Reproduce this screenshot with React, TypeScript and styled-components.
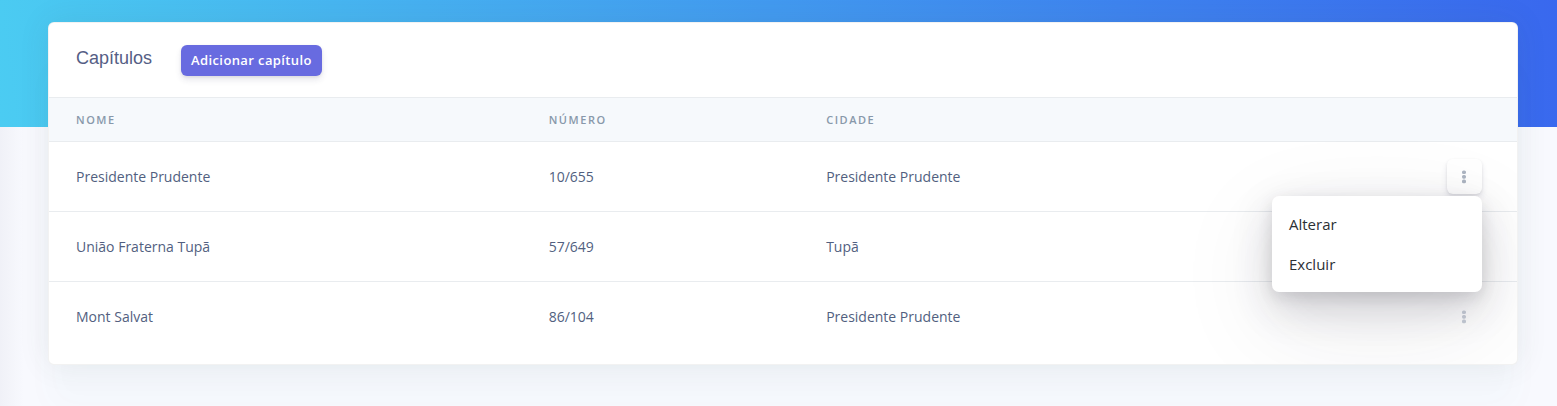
import React from "react";
import styled, { createGlobalStyle } from "styled-components";

const GlobalStyle = createGlobalStyle`
  *, *::before, *::after { box-sizing: border-box; }
  body {
    margin: 0;
    background: #f8f9fe;
    color: #525f7f;
    font-family: "Open Sans", sans-serif;
    font-size: 16px;
    line-height: 24px;
  }
`;

const Page = styled.div`
  min-height: 100vh;
  padding: 22px 39px 42px 48px;
  overflow: hidden;
  background:
    linear-gradient(83deg, #4bccf2, #3968ee) 0 0 / 100% 127px no-repeat,
    linear-gradient(90deg, rgba(136, 136, 160, 0.07), rgba(136, 136, 160, 0) 24px),
    #f8f9fe;
`;

const Card = styled.section`
  border: 1px solid rgba(0, 0, 0, 0.05);
  border-radius: 6px;
  background: #fff;
  box-shadow: 0 0 32px rgba(70, 80, 70, 0.09), 0 44px 32px rgba(0, 170, 170, 0.018);
`;

const CardHeader = styled.header`
  display: flex;
  align-items: center;
  gap: 29px;
  padding: 22px 27px 21px;
`;

const Title = styled.h3`
  margin: 0;
  padding-bottom: 5px;
  color: #555e85;
  font-family: "Liberation Sans", Arial, sans-serif;
  font-size: 18px;
  font-weight: 400;
  line-height: 24px;
`;

const AddButton = styled.button`
  padding: 3px 10px 4px;
  border: 0;
  border-radius: 6px;
  background: #686be0;
  color: #fff;
  font-family: inherit;
  font-size: 13px;
  font-weight: 600;
  letter-spacing: 0.03em;
  line-height: 24px;
  white-space: nowrap;
  box-shadow: 0 4px 6px rgba(50, 50, 93, 0.11), 0 1px 3px rgba(0, 0, 0, 0.08);
  cursor: pointer;
`;

const TableArea = styled.div`
  overflow: hidden;
  padding-bottom: 13px;
`;

const Table = styled.table`
  width: 100%;
  table-layout: fixed;
  border-collapse: separate;
  border-spacing: 0;
`;

const HeadCell = styled.th<{ $width?: string }>`
  width: ${(p) => p.$width ?? "auto"};
  height: 44px;
  padding: 0 27px;
  border-top: 1px solid #e9ecef;
  background: #f6f9fc;
  color: #8898aa;
  font-size: 11px;
  font-weight: 600;
  letter-spacing: 0.14em;
  text-align: left;
  text-transform: uppercase;
`;

const Cell = styled.td`
  height: 70px;
  padding: 0 27px;
  border-top: 1px solid #e9ecef;
  font-size: 14px;
`;

const ActionCell = styled(Cell)`
  padding-right: 35px;
`;

const Dropdown = styled.div`
  position: relative;
  width: 35px;
  margin-left: auto;
`;

const MoreButton = styled.button<{ $open: boolean }>`
  display: flex;
  align-items: center;
  justify-content: center;
  width: 35px;
  height: 35px;
  padding: 0 1px 0 0;
  border: 0;
  border-radius: 6px;
  background: transparent;
  color: ${(p) => (p.$open ? "#adb5c2" : "#c8ced8")};
  box-shadow: ${(p) =>
    p.$open ? "0 4px 6px rgba(50, 50, 93, 0.11), 0 1px 3px rgba(0, 0, 0, 0.08)" : "none"};
  cursor: pointer;
`;

const Menu = styled.div`
  position: absolute;
  top: 100%;
  right: 0;
  z-index: 10;
  width: 210px;
  margin-top: 2px;
  padding: 8px 0;
  border-radius: 7px;
  background: #fff;
  box-shadow: 0 30px 100px rgba(40, 35, 60, 0.1), 0 15px 40px rgba(40, 35, 60, 0.19),
    0 5px 15px rgba(0, 0, 0, 0.1);
`;

const MenuItem = styled.a`
  display: block;
  padding: 8px 17px;
  color: #2c3035;
  font-size: 15px;
  line-height: 24px;
  text-decoration: none;
`;

const MoreIcon = () => (
  <svg width="4" height="15" viewBox="0 0 4 15" fill="currentColor" aria-hidden="true">
    <rect y="1.4" width="4" height="3.7" rx="1.6" />
    <rect y="6" width="4" height="3.7" rx="1.6" />
    <rect y="10.6" width="4" height="3.7" rx="1.6" />
  </svg>
);

const chapters = [
  { name: "Presidente Prudente", number: "10/655", city: "Presidente Prudente" },
  { name: "União Fraterna Tupã", number: "57/649", city: "Tupã" },
  { name: "Mont Salvat", number: "86/104", city: "Presidente Prudente" },
];

export default function App() {
  const [open, setOpen] = React.useState<number | null>(0);

  return (
    <>
      <GlobalStyle />
      <Page>
        <Card>
          <CardHeader>
            <Title>Capítulos</Title>
            <AddButton type="button">Adicionar capítulo</AddButton>
          </CardHeader>
          <TableArea>
            <Table>
              <thead>
                <tr>
                  <HeadCell scope="col" $width="32.2%">Nome</HeadCell>
                  <HeadCell scope="col" $width="18.9%">Número</HeadCell>
                  <HeadCell scope="col" $width="32.2%">Cidade</HeadCell>
                  <HeadCell scope="col" aria-label="Ações" />
                </tr>
              </thead>
              <tbody>
                {chapters.map((chapter, i) => (
                  <tr key={chapter.number}>
                    <Cell>{chapter.name}</Cell>
                    <Cell>{chapter.number}</Cell>
                    <Cell>{chapter.city}</Cell>
                    <ActionCell>
                      <Dropdown>
                        <MoreButton
                          type="button"
                          aria-label="Opções"
                          aria-expanded={open === i}
                          $open={open === i}
                          onClick={() => setOpen(open === i ? null : i)}
                        >
                          <MoreIcon />
                        </MoreButton>
                        {open === i && (
                          <Menu>
                            <MenuItem href="#alterar">Alterar</MenuItem>
                            <MenuItem href="#excluir">Excluir</MenuItem>
                          </Menu>
                        )}
                      </Dropdown>
                    </ActionCell>
                  </tr>
                ))}
              </tbody>
            </Table>
          </TableArea>
        </Card>
      </Page>
    </>
  );
}
